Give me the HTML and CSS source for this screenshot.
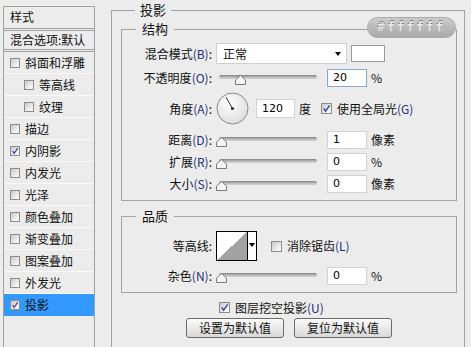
FILE: index.html
```html
<!DOCTYPE html>
<html lang="zh-CN">
<head>
    <meta charset="UTF-8">
    <title>图层样式 - 投影</title>
    <link rel="stylesheet" href="styles.css">
</head>
<body>
    <div class="side">
        <div class="side-head">样式</div>
        <div class="side-blend">混合选项:默认</div>
        <ul class="fx-list">
            <li class="fx"><span class="cb"></span>斜面和浮雕</li>
            <li class="fx sub"><span class="cb"></span>等高线</li>
            <li class="fx sub"><span class="cb"></span>纹理</li>
            <li class="fx"><span class="cb"></span>描边</li>
            <li class="fx"><span class="cb on"><svg viewBox="0 0 10 10"><path d="M2 5 L4 8 L8.5 1.5" /></svg></span>内阴影</li>
            <li class="fx"><span class="cb"></span>内发光</li>
            <li class="fx"><span class="cb"></span>光泽</li>
            <li class="fx"><span class="cb"></span>颜色叠加</li>
            <li class="fx"><span class="cb"></span>渐变叠加</li>
            <li class="fx"><span class="cb"></span>图案叠加</li>
            <li class="fx"><span class="cb"></span>外发光</li>
            <li class="fx selected"><span class="cb on"><svg viewBox="0 0 10 10"><path d="M2 5 L4 8 L8.5 1.5" /></svg></span>投影</li>
        </ul>
    </div>

    <div class="main">
        <fieldset class="grp grp-outer">
            <legend>投影</legend>

            <div class="grp-wrap">
                <fieldset class="grp grp-struct">
                    <legend>结构</legend>

                    <div class="row row-blend">
                        <label class="lbl">混合模式<span class="key">(B)</span>:</label>
                        <div class="select">正常<span class="caret"></span></div>
                        <div class="swatch"></div>
                    </div>

                    <div class="row row-opacity">
                        <label class="lbl">不透明度<span class="key">(O)</span>:</label>
                        <div class="slider">
                            <span class="track"></span>
                            <svg class="thumb" style="left: 19px" viewBox="0 0 11 10"><path d="M5.5 0.5 L10.5 5 L10.5 9.5 L0.5 9.5 L0.5 5 Z" /></svg>
                        </div>
                        <div class="num focus">20</div>
                        <span class="unit">%</span>
                    </div>

                    <div class="row row-angle">
                        <label class="lbl">角度<span class="key">(A)</span>:</label>
                        <svg class="dial" viewBox="0 0 33 33">
                            <defs>
                                <radialGradient id="dialFill" cx="0.4" cy="0.35" r="0.7">
                                    <stop offset="0" stop-color="#ffffff" />
                                    <stop offset="1" stop-color="#dcdcdc" />
                                </radialGradient>
                            </defs>
                            <circle cx="16.5" cy="16.5" r="15.5" fill="url(#dialFill)" stroke="#8a8a8a" />
                            <line x1="16.5" y1="16.5" x2="10" y2="5.2" stroke="#333" stroke-width="1" />
                            <circle cx="16.5" cy="16.5" r="1.6" fill="#333" />
                        </svg>
                        <div class="num num-angle">120</div>
                        <span class="unit">度</span>
                        <span class="cb on global"><svg viewBox="0 0 10 10"><path d="M2 5 L4 8 L8.5 1.5" /></svg></span>
                        <span class="cb-text">使用全局光<span class="key">(G)</span></span>
                    </div>

                    <div class="row row-distance">
                        <label class="lbl">距离<span class="key">(D)</span>:</label>
                        <div class="slider">
                            <span class="track"></span>
                            <svg class="thumb" style="left: 0px" viewBox="0 0 11 10"><path d="M5.5 0.5 L10.5 5 L10.5 9.5 L0.5 9.5 L0.5 5 Z" /></svg>
                        </div>
                        <div class="num">1</div>
                        <span class="unit">像素</span>
                    </div>

                    <div class="row row-spread">
                        <label class="lbl">扩展<span class="key">(R)</span>:</label>
                        <div class="slider">
                            <span class="track"></span>
                            <svg class="thumb" style="left: 0px" viewBox="0 0 11 10"><path d="M5.5 0.5 L10.5 5 L10.5 9.5 L0.5 9.5 L0.5 5 Z" /></svg>
                        </div>
                        <div class="num">0</div>
                        <span class="unit">%</span>
                    </div>

                    <div class="row row-size">
                        <label class="lbl">大小<span class="key">(S)</span>:</label>
                        <div class="slider">
                            <span class="track"></span>
                            <svg class="thumb" style="left: 0px" viewBox="0 0 11 10"><path d="M5.5 0.5 L10.5 5 L10.5 9.5 L0.5 9.5 L0.5 5 Z" /></svg>
                        </div>
                        <div class="num">0</div>
                        <span class="unit">像素</span>
                    </div>
                </fieldset>

                <div class="badge">#ffffff</div>
            </div>

            <fieldset class="grp grp-quality">
                <legend>品质</legend>

                <div class="row row-contour">
                    <label class="lbl">等高线:</label>
                    <div class="contour">
                        <div class="curve"></div>
                        <div class="drop"><span class="caret"></span></div>
                    </div>
                    <span class="cb aa"></span>
                    <span class="cb-text">消除锯齿<span class="key">(L)</span></span>
                </div>

                <div class="row row-noise">
                    <label class="lbl">杂色<span class="key">(N)</span>:</label>
                    <div class="slider">
                        <span class="track"></span>
                        <svg class="thumb" style="left: 0px" viewBox="0 0 11 10"><path d="M5.5 0.5 L10.5 5 L10.5 9.5 L0.5 9.5 L0.5 5 Z" /></svg>
                    </div>
                    <div class="num">0</div>
                    <span class="unit">%</span>
                </div>
            </fieldset>

            <div class="knockout">
                <span class="cb on"><svg viewBox="0 0 10 10"><path d="M2 5 L4 8 L8.5 1.5" /></svg></span>
                <span class="cb-text">图层挖空投影<span class="key">(U)</span></span>
            </div>

            <div class="btns">
                <button class="btn">设置为默认值</button>
                <button class="btn">复位为默认值</button>
            </div>
        </fieldset>
    </div>
</body>
</html>
```

FILE: styles.css
```css
body {
    margin: 0;
    width: 471px;
    height: 347px;
    overflow: hidden;
    display: flex;
    align-items: flex-start;
    background: #ececec;
    color: #111;
    font-family: "Noto Sans CJK SC", sans-serif;
    font-size: 12px;
    line-height: 16px;
}

/* left styles list */
.side {
    width: 90px;
    height: 341px;
    margin: 6px 0 0 3px;
    border: 1px solid #a0a0a0;
    border-bottom: none;
}
.side-head {
    height: 21px;
    line-height: 19px;
    padding-left: 6px;
    border-bottom: 1px solid #a0a0a0;
}
.side-blend {
    height: 18px;
    line-height: 17px;
    margin-top: 1px;
    padding-left: 6px;
    border-top: 1px solid #a0a0a0;
    border-bottom: 1px solid #a0a0a0;
    white-space: nowrap;
}
.fx-list {
    list-style: none;
    margin: 1px 0 0;
    padding: 0;
    border-top: 1px solid #a0a0a0;
}
.fx {
    display: flex;
    align-items: center;
    gap: 5px;
    height: 21px;
    padding-left: 6px;
    border-bottom: 1px solid #f9f9f9;
    white-space: nowrap;
}
.fx.sub {
    padding-left: 20px;
}
.fx.selected {
    background: #3399ff;
    border-bottom-color: #3399ff;
}
.fx .cb {
    width: 10px;
    height: 10px;
}

/* checkboxes */
.cb {
    position: relative;
    flex: none;
    width: 11px;
    height: 11px;
    box-sizing: border-box;
    border: 1px solid #8c8c8c;
    background: linear-gradient(135deg, #c9c9c9, #f6f6f6 80%);
}
.cb svg {
    position: absolute;
    left: 0;
    top: 0;
    width: 100%;
    height: 100%;
}
.cb svg path {
    fill: none;
    stroke: #3d4aa8;
    stroke-width: 1.6;
}
.cb-text {
    margin-left: 5px;
    white-space: nowrap;
}
.key {
    color: #1f2f78;
}

/* main panel */
.main {
    flex: 1;
    padding: 2px 6px 0 16px;
}
.grp {
    margin: 0;
    padding: 0;
    min-width: 0;
    border: 1px solid #a3a3a3;
}
.grp legend {
    margin-left: 14px;
    padding: 0 5px;
    font-size: 13px;
    line-height: 16px;
}
.grp-outer {
    box-sizing: border-box;
    height: 345px;
    padding: 3px 7px 0 9px;
    border-bottom: none;
}
.grp-wrap {
    position: relative;
}
.grp-struct {
    padding: 0 0 7px;
}
.grp-struct legend,
.grp-quality legend {
    padding: 0 6px;
}
.grp-quality {
    margin-top: 7px;
    padding: 0 0 7px;
}

.badge {
    position: absolute;
    right: 1px;
    top: -4px;
    width: 89px;
    height: 21px;
    box-sizing: border-box;
    border-radius: 11px;
    border: 1px solid #ababab;
    background: linear-gradient(#cbcbcb, #a9a9a9);
    color: #e9e9e9;
    font-family: "DejaVu Sans Mono", monospace;
    font-weight: bold;
    font-size: 12px;
    line-height: 19px;
    letter-spacing: 2.5px;
    text-align: center;
    text-shadow: 0 -1px 0 rgba(0, 0, 0, 0.4);
}

/* rows */
.row {
    display: flex;
    align-items: center;
}
.lbl {
    width: 94px;
    flex: none;
    box-sizing: border-box;
    padding-right: 4px;
    text-align: right;
    white-space: nowrap;
}
.row-blend {
    margin-top: 6px;
    height: 21px;
}
.row-opacity {
    margin-top: 5px;
    height: 18px;
}
.row-angle {
    margin-top: 5px;
    height: 33px;
}
.row-distance {
    margin-top: 6px;
    height: 18px;
}
.row-spread,
.row-size {
    margin-top: 4px;
    height: 18px;
}
.row-contour {
    margin-top: 7px;
    height: 30px;
}
.row-noise {
    margin-top: 6px;
    height: 18px;
}

.select {
    position: relative;
    width: 131px;
    height: 21px;
    box-sizing: border-box;
    padding-left: 6px;
    border: 1px solid #cfcfcf;
    background: #fff;
    line-height: 19px;
}
.caret {
    position: absolute;
    width: 0;
    height: 0;
    border-left: 3.5px solid transparent;
    border-right: 3.5px solid transparent;
    border-top: 4px solid #000;
}
.select .caret {
    right: 5px;
    top: 8px;
}
.swatch {
    width: 34px;
    height: 17px;
    margin-left: 4px;
    box-sizing: border-box;
    border: 1px solid #9a9a9a;
    background: #fff;
}

.slider {
    position: relative;
    width: 103px;
    height: 18px;
    margin-right: 8px;
    flex: none;
}
.track {
    position: absolute;
    left: 3px;
    right: 2px;
    top: 6px;
    height: 4px;
    border-radius: 2px;
    background: linear-gradient(#808080, #b8b8b8 50%, #d4d4d4);
}
.thumb {
    position: absolute;
    top: 6px;
    width: 11px;
    height: 10px;
}
.thumb path {
    fill: #f4f4f4;
    stroke: #7a7a7a;
}

.num {
    width: 40px;
    height: 18px;
    flex: none;
    box-sizing: border-box;
    padding-left: 5px;
    border: 1px solid #d2d2d2;
    background: #fff;
    color: #000;
    font-family: "DejaVu Sans", sans-serif;
    font-size: 11px;
    line-height: 16px;
}
.num.focus {
    border-color: #86a9d4;
}
.num-angle {
    width: 39px;
    height: 19px;
    line-height: 17px;
}
.unit {
    margin-left: 4px;
    white-space: nowrap;
}

.dial {
    width: 33px;
    height: 33px;
    margin-right: 7px;
    flex: none;
}
.global {
    margin-left: 10px;
}

.contour {
    display: flex;
    width: 41px;
    height: 30px;
    box-sizing: border-box;
    border: 1px solid #000;
    background: #fff;
}
.curve {
    width: 30px;
    background: linear-gradient(to top left, #a2a2a2 50%, #fff 50%);
}
.drop {
    position: relative;
    flex: 1;
    border-left: 1px solid #000;
}
.drop .caret {
    left: 1px;
    top: 11px;
}
.aa {
    margin-left: 14px;
}

.knockout {
    display: flex;
    align-items: center;
    margin: 7px 0 0 98px;
    height: 15px;
}
.btns {
    display: flex;
    justify-content: center;
    gap: 10px;
    margin-top: 3px;
}
.btn {
    width: 98px;
    height: 20px;
    padding: 0;
    border: 1px solid #6b6b6b;
    border-radius: 3px;
    background: linear-gradient(#fbfbfb, #e6e6e6 60%, #d8d8d8);
    color: #111;
    font-family: "Noto Sans CJK SC", sans-serif;
    font-size: 12px;
    line-height: 16px;
}
```
